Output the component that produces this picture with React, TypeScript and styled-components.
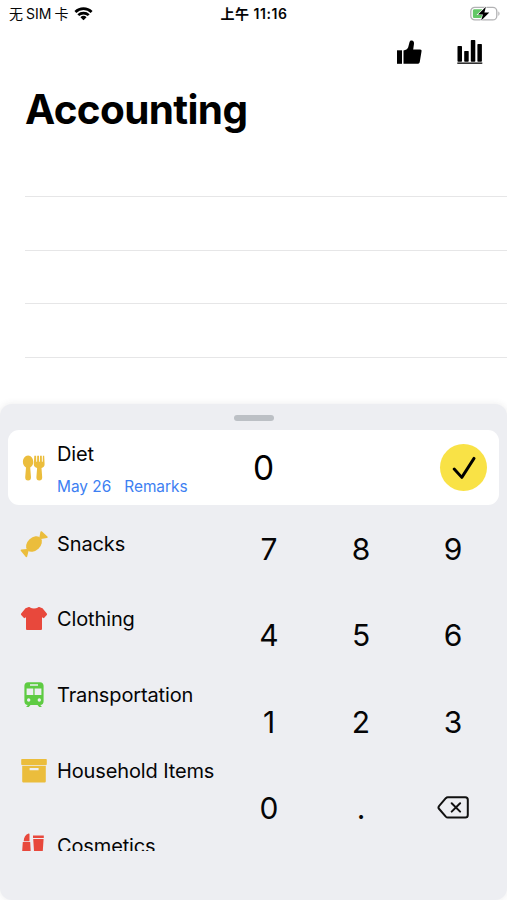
import React from "react";
import styled, { createGlobalStyle } from "styled-components";

const Global = createGlobalStyle`
  * { box-sizing: border-box; }
  body { margin: 0; background: #fff; color: #050506; font-family: Inter, "Noto Sans CJK SC", sans-serif; }
  button { border: 0; padding: 0; margin: 0; background: none; color: inherit; font: inherit; }
  svg { display: block; }
`;

const Screen = styled.main`
  width: 507px;
  height: 900px;
  display: flex;
  flex-direction: column;
  overflow: hidden;
  background: #fff;
`;

const StatusBar = styled.header`
  height: 28px;
  flex: none;
  display: grid;
  grid-template-columns: 1fr auto 1fr;
  align-items: center;
  padding: 0 6px 1px 9px;
`;
const Carrier = styled.div`
  display: flex;
  align-items: center;
  gap: 6px;
  font-size: 14px;
  line-height: 20px;
  white-space: nowrap;
`;
const CarrierName = styled.span`
  display: flex;
  gap: 3px;
`;
const Clock = styled.div`
  display: flex;
  gap: 4px;
  font-size: 14px;
  line-height: 20px;
  font-weight: 600;
  letter-spacing: 0.55px;
  margin-right: 2px;
  white-space: nowrap;
`;
const Battery = styled.div`
  justify-self: end;
`;

const Toolbar = styled.nav`
  height: 48px;
  flex: none;
  display: flex;
  justify-content: flex-end;
  align-items: center;
  gap: 33px;
  padding-right: 23px;
`;
const Title = styled.h1`
  margin: 6px 0 0 25px;
  height: 55px;
  flex: none;
  font-size: 40.5px;
  line-height: 55px;
  font-weight: 700;
  letter-spacing: -0.65px;
  color: #000;
`;
const Ledger = styled.div`
  height: 267px;
  flex: none;
  margin-left: 25px;
  padding-top: 6.2px;
`;
const LedgerRow = styled.div`
  height: 53.7px;
  border-bottom: 1px solid #e6e6e7;
`;

const Sheet = styled.section`
  height: 496px;
  flex: none;
  background: #edeef2;
  border-radius: 12px;
  box-shadow: 0 0 7px rgba(60, 60, 67, 0.1);
`;
const HandleArea = styled.div`
  height: 26px;
  display: flex;
  justify-content: center;
  padding-top: 11px;
`;
const Handle = styled.div`
  width: 40px;
  height: 6px;
  border-radius: 3px;
  background: #bcc0c5;
`;
const EntryCard = styled.div`
  height: 75px;
  margin: 0 8px;
  border-radius: 11px;
  background: #fff;
  display: grid;
  grid-template-columns: 245px 1fr 47px;
  align-items: center;
  padding-right: 12px;
`;
const EntryInfo = styled.div`
  display: flex;
  align-items: center;
  padding-left: 12px;
`;
const EntryText = styled.div`
  display: flex;
  flex-direction: column;
  gap: 9px;
  margin-left: 9px;
  padding-top: 3px;
`;
const CategoryName = styled.span`
  font-size: 20px;
  line-height: 26px;
  letter-spacing: -0.13px;
  white-space: nowrap;
`;
const Links = styled.div`
  display: flex;
  gap: 13px;
  height: 22px;
`;
const LinkButton = styled.button`
  color: #3d80f2;
  font-size: 15.4px;
  line-height: 22px;
  white-space: nowrap;
`;
const Amount = styled.output`
  font-size: 33.5px;
  line-height: 44px;
  font-weight: 400;
  color: #000;
`;
const Confirm = styled.button`
  width: 47px;
  height: 47px;
  border-radius: 50%;
  background: #f9e246;
  display: grid;
  place-items: center;
`;

const Lower = styled.div`
  display: grid;
  grid-template-columns: 223px 276px;
  height: 346px;
`;
const Categories = styled.ul`
  list-style: none;
  margin: 0;
  padding: 1px 0 0 20px;
  height: 346px;
  overflow: hidden;
`;
const Category = styled.li`
  height: 75.6px;
  display: flex;
  align-items: center;
  gap: 9px;
`;
const Keypad = styled.div`
  display: grid;
  grid-template-columns: repeat(3, 92px);
  grid-template-rows: repeat(4, 86.5px);
`;
const Key = styled.button`
  display: grid;
  place-items: center;
  padding-top: 1px;
  font-size: 30px;
  line-height: 40px;
`;

const GOLD = "#ebbd3c";
const RED = "#e8483c";
const GREEN = "#5ecb43";

const Glyph = ({ children }: { children: React.ReactNode }) => (
  <svg width="28" height="28" viewBox="0 0 28 28">{children}</svg>
);

const CutleryIcon = () => (
  <Glyph>
    <g fill={GOLD}>
      <path d="M8.100 1.500C5 1.500 2.900 4.500 2.900 7.900c0 2.500 1.300 4.500 3.100 5.600L5.200 23.200c-.1 2 .9 3.300 2.900 3.300s3-1.300 2.900-3.300l-.8-9.700c1.800-1.100 3.100-3.100 3.100-5.600 0-3.400-2.100-6.400-5.200-6.400Z" />
      <path d="M14.300 1.800h1.800l.2 6h.8l.1-6h1.800l.1 6h.8l.1-6h1.800l.1 6h.8l.2-6h1.300l.4 8.400c0 2.100-1.300 3.300-3.100 3.700l.7 9.300c.1 2-.9 3.300-2.900 3.300s-3-1.300-2.900-3.300l.7-9.300c-1.800-.4-3.300-1.600-3.300-3.700Z" />
    </g>
  </Glyph>
);
const CandyIcon = () => (
  <Glyph>
    <g fill={GOLD} transform="rotate(-43 14 14)">
      <ellipse cx="14" cy="14" rx="9" ry="6.500" />
      <path d="M5.500 12.800 1 9.500c-.7-.4-1.300 0-1.400.8l-.5 7.400c0 .8.7 1.200 1.400.8l5-3.300ZM22.500 12.800l4.500-3.300c.7-.4 1.300 0 1.400.8l.5 7.400c0 .8-.7 1.200-1.400.8l-5-3.300Z" />
    </g>
  </Glyph>
);
const ShirtIcon = () => (
  <Glyph>
    <path fill={RED} d="M8.200 2.200C8.800 2 9.500 2 10 2.400c2.400 1.500 5.600 1.500 8 0 .5-.4 1.200-.4 1.800-.2l2.700 1 4.300 5.200c.4.5.4 1 0 1.500L23.800 13.200 22 12.200v11.600c0 .8-.5 1.300-1.300 1.300H7.300c-.8 0-1.300-.5-1.300-1.300V12.200l-1.800 1-3-3.300c-.4-.5-.4-1 0-1.500l4.300-5.200Z" />
  </Glyph>
);
const TrainIcon = () => (
  <Glyph>
    <path fill={GREEN} fillRule="evenodd" d="M8 1.200h12c2.200 0 3.600 1.500 3.600 3.600v15.400c0 2.200-1.200 3.600-3.400 3.700l1.700 2.200h-2.700l-1.700-2.200h-7l-1.700 2.200H6.100l1.700-2.200c-2.200-.1-3.400-1.500-3.400-3.700V4.800c0-2.100 1.400-3.600 3.600-3.600ZM10 3.300v1.500h8V3.300ZM6.600 7.400V14h6.700V7.400Zm8 0V14h6.800V7.400ZM8.700 17.300a1.700 1.700 0 1 0 0 3.400 1.700 1.700 0 0 0 0-3.400Zm10.600 0a1.700 1.700 0 1 0 0 3.400 1.700 1.700 0 0 0 0-3.400Z" />
  </Glyph>
);
const BoxIcon = () => (
  <Glyph>
    <g fill={GOLD}>
      <rect x="1.200" y="2" width="25.600" height="6" rx=".8" />
      <path fillRule="evenodd" d="M2.200 8.700h23.600V24c0 1-.5 1.500-1.500 1.500H3.700c-1 0-1.500-.5-1.500-1.500Zm7.400 2.300v2.300h9V11Z" />
    </g>
  </Glyph>
);
const CosmeticsIcon = () => (
  <Glyph>
    <g fill={RED}>
      <path d="M3.700 9.300C3.800 5.500 5.500 2.500 8.700 1.500c.5-.1.800.1.800.6v7.200ZM2.800 9.900h7.400l.8 15H1.800Z" />
      <path d="M13 3.500h10.800v2.600H13ZM13.200 6.900h10.400l-1.200 18h-8Z" />
    </g>
  </Glyph>
);
const WifiIcon = () => (
  <svg width="19" height="14" viewBox="0 0 20 15">
    <g fill="none" stroke="#000" strokeWidth="2.900">
      <path d="M1.300 5.300a12.600 12.600 0 0 1 17.400 0M4.400 8.700a8.200 8.200 0 0 1 11.200 0" />
    </g>
    <path d="M6.700 10.900a4.800 4.800 0 0 1 6.600 0L10 14.300Z" />
  </svg>
);
const BatteryIcon = () => (
  <svg width="31" height="16" viewBox="0 0 31 16">
    <rect x=".8" y="1.300" width="26" height="12.600" rx="4" fill="#fff" stroke="#b2b2b4" strokeWidth="1.300" />
    <path d="M28.300 5.500c1.600.5 1.600 3.700 0 4.200Z" fill="#b2b2b4" />
    <path d="M4.500 3.300H12v8.700H4.500c-1 0-1.600-.6-1.600-1.600V4.900c0-1 .6-1.600 1.600-1.600Z" fill="#62c766" />
    <path d="M15.900.8 8 8.500h4.900l-1.700 6 8.100-7.900h-4.900Z" fill="#000" stroke="#fff" strokeWidth="1.200" paintOrder="stroke" />
  </svg>
);
const ThumbIcon = () => (
  <svg width="28" height="28" viewBox="0 0 28 28">
    <rect x="2" y="12.300" width="5" height="13.500" />
    <path d="M8.500 12.500c2.300-.3 4-1.300 4.700-3.200l1.300-5c.4-1.400 1.100-1.900 2.200-1.700 1.700.2 2.500 1.400 2.300 3.200l-.8 5.800h6.900c1.100 0 1.700.7 1.400 1.800l-1.700 10.400c-.3 1.400-1 2-2.400 2H8.500Z" />
  </svg>
);
const ChartIcon = () => (
  <svg width="28" height="28" viewBox="0 0 28 28">
    <rect x="1.500" y="8" width="4.500" height="15.700" rx=".7" />
    <rect x="8.200" y="12.900" width="4.500" height="10.800" rx=".7" />
    <rect x="14.800" y="2" width="4.500" height="21.700" rx=".7" />
    <rect x="21.400" y="6" width="4.500" height="17.700" rx=".7" />
    <rect x="1.300" y="24.400" width="25" height="1.600" fill="#333" />
  </svg>
);
const CheckIcon = () => (
  <svg width="24" height="24" viewBox="0 0 24 24" fill="none" stroke="#000" strokeWidth="2.900" strokeLinecap="round" strokeLinejoin="round">
    <path d="m2.200 13 7.600 8.400L22 2.400" />
  </svg>
);
const DeleteIcon = () => (
  <svg width="32" height="24" viewBox="0 0 32 24" fill="none" stroke="#111" strokeWidth="2" strokeLinecap="round" strokeLinejoin="round">
    <path d="M10.800 1.300h17.500c1.700 0 2.500.8 2.500 2.500V19c0 1.700-.8 2.500-2.500 2.500H10.800c-.8 0-1.400-.3-2-.9L2.200 13c-.9-1-.9-2.200 0-3.200l6.600-7.600c.6-.6 1.200-.9 2-.9ZM14.700 7.200l8.400 8.400m0-8.400-8.400 8.400" />
  </svg>
);

const categories = [
  { name: "Snacks", icon: CandyIcon },
  { name: "Clothing", icon: ShirtIcon },
  { name: "Transportation", icon: TrainIcon },
  { name: "Household Items", icon: BoxIcon },
  { name: "Cosmetics", icon: CosmeticsIcon },
];
const keys = ["7", "8", "9", "4", "5", "6", "1", "2", "3", "0", "."];

export default function App() {
  return (
    <>
      <Global />
      <Screen>
        <StatusBar>
          <Carrier>
            <CarrierName><span>无</span><span>SIM</span><span>卡</span></CarrierName>
            <WifiIcon />
          </Carrier>
          <Clock><span>上午</span><span>11:16</span></Clock>
          <Battery><BatteryIcon /></Battery>
        </StatusBar>
        <Toolbar>
          <button aria-label="Like"><ThumbIcon /></button>
          <button aria-label="Statistics"><ChartIcon /></button>
        </Toolbar>
        <Title>Accounting</Title>
        <Ledger>
          {[0, 1, 2, 3].map((row) => <LedgerRow key={row} />)}
        </Ledger>
        <Sheet>
          <HandleArea><Handle /></HandleArea>
          <EntryCard>
            <EntryInfo>
              <CutleryIcon />
              <EntryText>
                <CategoryName>Diet</CategoryName>
                <Links>
                  <LinkButton>May 26</LinkButton>
                  <LinkButton>Remarks</LinkButton>
                </Links>
              </EntryText>
            </EntryInfo>
            <Amount>0</Amount>
            <Confirm aria-label="Save"><CheckIcon /></Confirm>
          </EntryCard>
          <Lower>
            <Categories>
              {categories.map(({ name, icon: Icon }) => (
                <Category key={name}>
                  <Icon />
                  <CategoryName>{name}</CategoryName>
                </Category>
              ))}
            </Categories>
            <Keypad>
              {keys.map((label) => <Key key={label}>{label}</Key>)}
              <Key aria-label="Delete"><DeleteIcon /></Key>
            </Keypad>
          </Lower>
        </Sheet>
      </Screen>
    </>
  );
}
